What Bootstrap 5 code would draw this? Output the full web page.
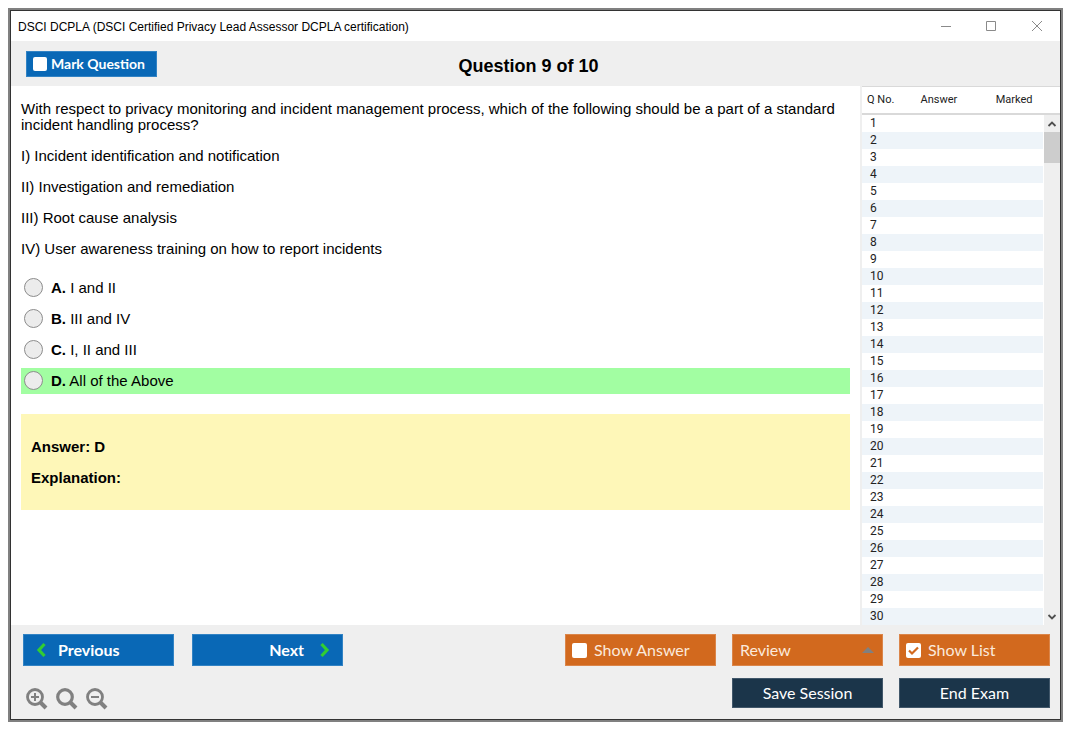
<!DOCTYPE html>
<html lang="en">
<head>
<meta charset="utf-8">
<meta name="viewport" content="width=device-width, initial-scale=1">
<title>DSCI DCPLA Exam</title>
<link rel="stylesheet" href="https://cdn.jsdelivr.net/npm/bootstrap@5.3.0/dist/css/bootstrap.min.css">
<style>
  body { font-family: "Liberation Sans", Arial, sans-serif; font-size: 15px; line-height: 16px; color: #000; background: #fff; padding: 8px 12px 12px 8px; }
  .exam-window { border: 2px solid #808080; outline: 1px solid #333; outline-offset: -3px; padding: 1px; }
  .title-bar { height: 30px; padding: 1px 16px 0 7px; font-size: 12px; }
  .caption-btn { border: 0; background: none; padding: 0; display: flex; color: #8a8a8a; }
  .chrome-bg { background: #efefef; }
  .tool-row { display: grid; grid-template-columns: 1fr auto 1fr; height: 45px; padding: 0 29px 0 15px; }
  .tool-row h1 { font-size: 18px; line-height: 20px; font-weight: 700; margin: 4px 0 0; }
  .flat-btn { font-family: Lato, sans-serif; font-size: 16px; line-height: 20px; color: #fff; border: 1px solid transparent; border-radius: 0; height: 32px; width: 151px; }
  .flat-btn.blue { background: #0968b6; border-color: #3283c4; font-weight: 700; }
  .flat-btn.orange { background: #d2691e; border-color: #db8549; color: #fbe9dc; }
  .flat-btn.navy { background: #1b354a; border-color: #41576a; height: 30px; }
  .flat-btn.mark-btn { width: 131px; height: 26px; font-size: 14px; padding: 0 6px; }
  .tick { appearance: none; width: 15px; height: 15px; background: #fff; border-radius: 2px; margin: 0; flex: none; }
  .tick:checked { background: #fff url("data:image/svg+xml,%3Csvg xmlns='http://www.w3.org/2000/svg' viewBox='0 0 15 15'%3E%3Cpath d='M3 7.5l3 3L12 4.5' fill='none' stroke='%23d2691e' stroke-width='2.2'/%3E%3C/svg%3E"); }
  .check-btn { padding-left: 6px; gap: 7px; }
  .mark-btn .tick { width: 14px; height: 14px; }
  .review-select { appearance: none; padding: 0 7px; background: #d2691e url("data:image/svg+xml,%3Csvg xmlns='http://www.w3.org/2000/svg' width='12' height='6'%3E%3Cpath d='M6 0l6 6H0z' fill='%23808080'/%3E%3C/svg%3E") no-repeat right 8px center !important; }
  .question { padding: 15px 10px 0 10px; min-width: 0; }
  .question p { margin-bottom: 15px; }
  .question .options { padding-top: 3px; }
  .option { height: 26px; margin-bottom: 5px; padding: 0 0 1px 3px; gap: 8px; }
  .option.correct { background: #a2fea2; }
  .option input { appearance: none; width: 19px; height: 19px; border: 1px solid #8c8c8c; border-radius: 50%; background: #ececec; margin: 0; }
  .answer-box { background: #fef7b8; padding: 25px 10px 9px; margin-top: 20px; font-weight: 700; }
  .side-list { flex: 0 0 200px; border-left: 2px solid #efefef; position: relative; font-size: 12px; color: #222; }
  .side-list table { table-layout: fixed; width: 100%; line-height: 16px; border-collapse: separate; border-spacing: 0; }
  .side-list th { font-family: Roboto, sans-serif; font-size: 11px; font-weight: 400; height: 29px; padding: 0 0 0 5px; border-top: 1px solid #d9d9d9; border-bottom: 2px solid #d9d9d9; vertical-align: middle; }
  .side-list td { height: 17px; padding: 0 0 1px 8px; font-family: Roboto, sans-serif; }
  .side-list tbody tr:nth-child(even) td { background: #eef4f9; }
  .scroll-strip { position: absolute; top: 29px; right: 0; bottom: 0; width: 17px; background: #efefef; border-left: 1px solid #fff; color: #505050; }
  .scroll-strip button { border: 0; background: none; padding: 0; height: 17px; display: flex; align-items: center; justify-content: center; color: #505050; }
  .thumb { height: 31px; background: #cdcdcd; }
  .bottom-bar { padding: 9px 10px 11px 12px; }
  .zoom-btn { border: 0; background: none; padding: 0; color: #808080; display: flex; }
  .zoom-row { gap: 8px; margin: 0 0 -2px 3px; }
  .nav-pair { gap: 18px; }
  .action-grid { display: grid; grid-template-columns: repeat(3, auto); gap: 12px 16px; }
</style>
</head>
<body>
<div class="exam-window">
  <header>
    <div class="title-bar d-flex justify-content-between align-items-center">
      <span>DSCI DCPLA (DSCI Certified Privacy Lead Assessor DCPLA certification)</span>
      <div class="d-flex">
        <button class="caption-btn me-4" aria-label="Minimize"><svg width="22" height="12"><path d="M1 5.500h10" stroke="currentColor"/></svg></button>
        <button class="caption-btn me-4" aria-label="Maximize"><svg width="22" height="12"><path d="M.5.5h9v9h-9z" fill="none" stroke="currentColor"/></svg></button>
        <button class="caption-btn" aria-label="Close"><svg width="12" height="12"><path d="M0 0l10 10M10 0L0 10" stroke="currentColor"/></svg></button>
      </div>
    </div>
    <div class="tool-row chrome-bg align-items-center">
      <label class="flat-btn blue mark-btn d-flex align-items-center gap-1 text-nowrap" for="mark"><input class="tick" type="checkbox" id="mark">Mark Question</label>
      <h1>Question 9 of 10</h1>
    </div>
  </header>
  <div class="d-flex">
    <main class="question flex-grow-1">
      <p>With respect to privacy monitoring and incident management process, which of the following should be a part of a standard incident handling process?</p>
      <p>I) Incident identification and notification</p>
      <p>II) Investigation and remediation</p>
      <p>III) Root cause analysis</p>
      <p>IV) User awareness training on how to report incidents</p>
      <div class="options">
        <label class="option d-flex align-items-center"><input type="radio" name="choice"><span><b>A.</b> I and II</span></label>
        <label class="option d-flex align-items-center"><input type="radio" name="choice"><span><b>B.</b> III and IV</span></label>
        <label class="option d-flex align-items-center"><input type="radio" name="choice"><span><b>C.</b> I, II and III</span></label>
        <label class="option correct d-flex align-items-center"><input type="radio" name="choice"><span><b>D.</b> All of the Above</span></label>
      </div>
      <section class="answer-box">
        <p>Answer: D</p>
        <p>Explanation:</p>
      </section>
    </main>
    <aside class="side-list">
      <table>
        <colgroup><col style="width:27%"><col style="width:38%"><col></colgroup>
        <thead><tr><th>Q No.</th><th>Answer</th><th>Marked</th></tr></thead>
        <tbody id="rows"></tbody>
      </table>
      <div class="scroll-strip d-flex flex-column">
        <button aria-label="Scroll up"><svg width="10" height="8"><path d="M1.500 6L5 2.500 8.500 6" fill="none" stroke="currentColor" stroke-width="1.800"/></svg></button>
        <div class="thumb"></div>
        <button class="mt-auto" aria-label="Scroll down"><svg width="10" height="8"><path d="M1.500 2L5 5.500 8.500 2" fill="none" stroke="currentColor" stroke-width="1.800"/></svg></button>
      </div>
    </aside>
  </div>
  <footer class="bottom-bar chrome-bg d-flex justify-content-between">
    <div class="d-flex flex-column justify-content-between">
      <div class="d-flex nav-pair">
        <button class="flat-btn blue d-flex align-items-center"><svg width="12" height="16" class="ms-1 me-2"><path d="M10.500 2L5 8l5.500 6" fill="none" stroke="#32cd32" stroke-width="3.200"/></svg><span class="ms-1">Previous</span></button>
        <button class="flat-btn blue d-flex align-items-center justify-content-end"><span class="me-2">Next</span><svg width="12" height="16" class="ms-2 me-1"><path d="M1.500 2L7 8l-5.500 6" fill="none" stroke="#32cd32" stroke-width="3.200"/></svg></button>
      </div>
      <div class="d-flex zoom-row">
        <button class="zoom-btn" aria-label="Zoom in"><svg width="22" height="22" fill="none" stroke="currentColor"><circle cx="9" cy="9" r="7.500" stroke-width="2.800"/><path d="M14 14l6 6" stroke-width="4"/><path d="M5 9h8M9 5v8" stroke-width="2"/></svg></button>
        <button class="zoom-btn" aria-label="Reset zoom"><svg width="22" height="22" fill="none" stroke="currentColor"><circle cx="9" cy="9" r="7.300" stroke-width="3.200"/><path d="M14 14l6 6" stroke-width="4"/></svg></button>
        <button class="zoom-btn" aria-label="Zoom out"><svg width="22" height="22" fill="none" stroke="currentColor"><circle cx="9" cy="9" r="7.500" stroke-width="2.800"/><path d="M14 14l6 6" stroke-width="4"/><path d="M5 9h8" stroke-width="2"/></svg></button>
      </div>
    </div>
    <div class="action-grid">
      <label class="flat-btn orange check-btn d-flex align-items-center" for="show-answer"><input class="tick" type="checkbox" id="show-answer">Show Answer</label>
      <select class="flat-btn orange review-select" aria-label="Review"><option>Review</option></select>
      <label class="flat-btn orange check-btn d-flex align-items-center" for="show-list"><input class="tick" type="checkbox" id="show-list" checked>Show List</label>
      <span></span>
      <button class="flat-btn navy">Save Session</button>
      <button class="flat-btn navy">End Exam</button>
    </div>
  </footer>
</div>
<script src="https://cdn.jsdelivr.net/npm/bootstrap@5.3.0/dist/js/bootstrap.bundle.min.js"></script>
<script>
  const rows = document.getElementById('rows');
  for (let n = 1; n <= 30; n++) {
    const row = rows.insertRow();
    row.insertCell().textContent = n;
    row.insertCell();
    row.insertCell();
  }
</script>
</body>
</html>
